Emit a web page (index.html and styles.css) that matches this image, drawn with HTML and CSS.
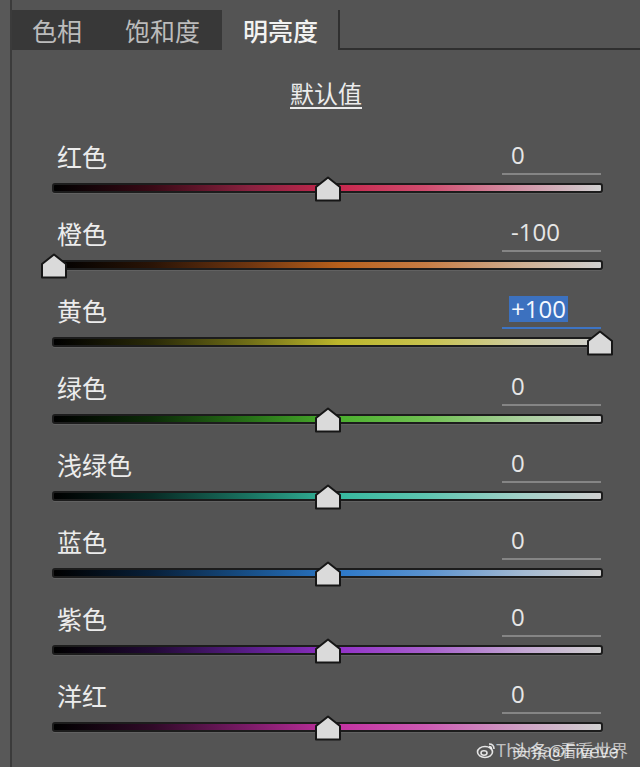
FILE: index.html
```html
<!DOCTYPE html>
<html lang="zh">
<head>
<meta charset="utf-8">
<title>明亮度</title>
<link rel="stylesheet" href="styles.css">
</head>
<body>
<div class="app">
  <div class="edge"></div>
  <div class="panel">
    <div class="tabs">
      <div class="tab-group">
        <div class="tab">色相</div>
        <div class="tab">饱和度</div>
      </div>
      <div class="tab active">明亮度</div>
      <div class="tab-fill"></div>
    </div>
    <div class="defaults"><span>默认值</span></div>
    <div class="rows">
      <div class="row">
        <div class="head"><span class="label">红色</span><span class="value"><span class="num">0</span></span></div>
        <div class="slider"><div class="track red"></div><svg class="thumb" style="left:50%" viewBox="0 0 28 26"><path d="M2 11 L14 1.5 L26 11 V24.5 H2 Z"/></svg></div>
      </div>
      <div class="row">
        <div class="head"><span class="label">橙色</span><span class="value"><span class="num">-100</span></span></div>
        <div class="slider"><div class="track orange"></div><svg class="thumb" style="left:0.3%" viewBox="0 0 28 26"><path d="M2 11 L14 1.5 L26 11 V24.5 H2 Z"/></svg></div>
      </div>
      <div class="row">
        <div class="head"><span class="label">黄色</span><span class="value active"><span class="num">+100</span></span></div>
        <div class="slider"><div class="track yellow"></div><svg class="thumb" style="left:99.4%" viewBox="0 0 28 26"><path d="M2 11 L14 1.5 L26 11 V24.5 H2 Z"/></svg></div>
      </div>
      <div class="row">
        <div class="head"><span class="label">绿色</span><span class="value"><span class="num">0</span></span></div>
        <div class="slider"><div class="track green"></div><svg class="thumb" style="left:50%" viewBox="0 0 28 26"><path d="M2 11 L14 1.5 L26 11 V24.5 H2 Z"/></svg></div>
      </div>
      <div class="row">
        <div class="head"><span class="label">浅绿色</span><span class="value"><span class="num">0</span></span></div>
        <div class="slider"><div class="track aqua"></div><svg class="thumb" style="left:50%" viewBox="0 0 28 26"><path d="M2 11 L14 1.5 L26 11 V24.5 H2 Z"/></svg></div>
      </div>
      <div class="row">
        <div class="head"><span class="label">蓝色</span><span class="value"><span class="num">0</span></span></div>
        <div class="slider"><div class="track blue"></div><svg class="thumb" style="left:50%" viewBox="0 0 28 26"><path d="M2 11 L14 1.5 L26 11 V24.5 H2 Z"/></svg></div>
      </div>
      <div class="row">
        <div class="head"><span class="label">紫色</span><span class="value"><span class="num">0</span></span></div>
        <div class="slider"><div class="track purple"></div><svg class="thumb" style="left:50%" viewBox="0 0 28 26"><path d="M2 11 L14 1.5 L26 11 V24.5 H2 Z"/></svg></div>
      </div>
      <div class="row">
        <div class="head"><span class="label">洋红</span><span class="value"><span class="num">0</span></span></div>
        <div class="slider"><div class="track magenta"></div><svg class="thumb" style="left:50%" viewBox="0 0 28 26"><path d="M2 11 L14 1.5 L26 11 V24.5 H2 Z"/></svg></div>
      </div>
    </div>
  </div>
</div>
<div class="watermark">
  <svg class="weibo" viewBox="0 0 20 20"><ellipse cx="9" cy="12" rx="7.5" ry="5.5"/><ellipse cx="8" cy="13" rx="3" ry="2.2"/><path d="M13 4 Q18 4 18 9"/><path d="M13 6.5 Q15.5 6.5 15.5 9"/></svg>
  <span class="wm-a">Thomas看看世界</span>
  <span class="wm-b">头条@Fiveve</span>
</div>
</body>
</html>
```
FILE: styles.css
```css
html, body {
  margin: 0;
  padding: 0;
}
body {
  width: 640px;
  height: 767px;
  overflow: hidden;
  background: #545454;
  font-family: "Noto Sans CJK SC", "Noto Sans", sans-serif;
  position: relative;
}
.app {
  display: flex;
  height: 767px;
}
.edge {
  width: 10px;
  background: #585858;
  border-right: 2px solid #3b3b3b;
  flex: none;
}
.panel {
  flex: 1;
  padding-top: 10px;
  display: flex;
  flex-direction: column;
}
.tabs {
  display: flex;
  height: 40px;
}
.tab-group {
  display: flex;
  gap: 3px;
  background: #383838;
  padding-right: 2px;
}
.tab {
  display: flex;
  align-items: center;
  padding: 0 20px;
  font-size: 25px;
  color: #bcbcbc;
  line-height: 1;
}
.tab.active {
  color: #f2f2f2;
  font-weight: 500;
  padding: 0 20px 0 21px;
  border-right: 2px solid #2f2f2f;
}
.tab-fill {
  flex: 1;
  border-bottom: 2px solid #2f2f2f;
}
.defaults {
  margin-top: 26px;
  margin-bottom: 27px;
  height: 34px;
  line-height: 34px;
  text-align: center;
  font-size: 24px;
  color: #ececec;
}
.defaults span {
  text-decoration: underline;
  text-decoration-thickness: 2px;
  text-underline-offset: 4px;
}
.rows {
  display: flex;
  flex-direction: column;
}
.row {
  padding: 0 37px 0 40px;
  display: flex;
  flex-direction: column;
}
.head {
  height: 38px;
  display: flex;
  align-items: center;
  justify-content: space-between;
  padding: 0 2px 0 5px;
}
.label {
  font-size: 25px;
  color: #ececec;
  line-height: 1;
}
.value {
  width: 99px;
  height: 38px;
  box-sizing: border-box;
  padding-left: 9px;
  display: flex;
  align-items: center;
  border-bottom: 2px solid #858585;
}
.num {
  font-family: "Open Sans", "Liberation Sans", sans-serif;
  font-size: 24px;
  color: #e6e6e6;
  line-height: 26px;
}
.value.active {
  border-bottom-color: #3d74c4;
}
.value.active .num {
  background: #3c71bf;
  color: #f4f8ff;
  padding: 0 2px;
  margin-left: -2px;
}
.slider {
  position: relative;
  height: 39px;
}
.track {
  position: absolute;
  left: 0;
  right: 0;
  top: 8px;
  height: 10px;
  box-sizing: border-box;
  border: 2px solid #1c1c1c;
  border-radius: 3px;
  box-shadow: 0 1px 0 rgba(255,255,255,0.08);
}
.thumb {
  position: absolute;
  top: 1px;
  width: 28px;
  height: 26px;
  transform: translateX(-50%);
}
.thumb path {
  fill: #dadada;
  stroke: #161616;
  stroke-width: 2;
  stroke-linejoin: round;
}
.red { background: linear-gradient(90deg, #000 0%, #3a0a16 18%, #8a2240 36%, #c8284e 52%, #d04c6e 68%, #d296a8 86%, #d0d0d0 100%); }
.orange { background: linear-gradient(90deg, #000 0%, #2a1406 18%, #703610 36%, #b8601c 52%, #c67c44 68%, #cfb094 86%, #d0d0d0 100%); }
.yellow { background: linear-gradient(90deg, #000 0%, #2a2a08 18%, #727018 36%, #bcb62c 52%, #c8c24e 68%, #cfcca2 86%, #d0d0d0 100%); }
.green { background: linear-gradient(90deg, #000 0%, #0c2c08 18%, #287218 36%, #4cb02e 52%, #70c052 68%, #aacf9e 86%, #d0d0d0 100%); }
.aqua { background: linear-gradient(90deg, #000 0%, #082c26 18%, #1a7462 36%, #36b89e 52%, #5ec4b0 68%, #a4d0c8 86%, #d0d0d0 100%); }
.blue { background: linear-gradient(90deg, #000 0%, #08203a 18%, #185088 36%, #2c78c8 52%, #5a92ce 68%, #a4bad2 86%, #d0d0d0 100%); }
.purple { background: linear-gradient(90deg, #000 0%, #220a36 18%, #5a1e8a 36%, #9232c8 52%, #a65ecc 68%, #c2a6d2 86%, #d0d0d0 100%); }
.magenta { background: linear-gradient(90deg, #000 0%, #300a28 18%, #7e1c6a 36%, #c432a2 52%, #cc5ab2 68%, #cea2c4 86%, #d0d0d0 100%); }
.watermark {
  position: absolute;
  left: 476px;
  top: 737px;
  width: 162px;
  height: 26px;
}
.weibo {
  position: absolute;
  left: 0;
  top: 3px;
  width: 20px;
  height: 20px;
}
.weibo ellipse, .weibo path {
  fill: none;
  stroke: rgba(255,255,255,0.85);
  stroke-width: 1.6;
}
.wm-a, .wm-b {
  position: absolute;
  top: 0;
  line-height: 26px;
  white-space: nowrap;
  font-family: "Noto Sans CJK SC", "Liberation Sans", sans-serif;
}
.wm-a {
  left: 20px;
  color: rgba(255,255,255,0.65);
  font-size: 17px;
}
.wm-b {
  left: 36px;
  color: rgba(255,255,255,0.75);
  font-size: 18px;
}
```
